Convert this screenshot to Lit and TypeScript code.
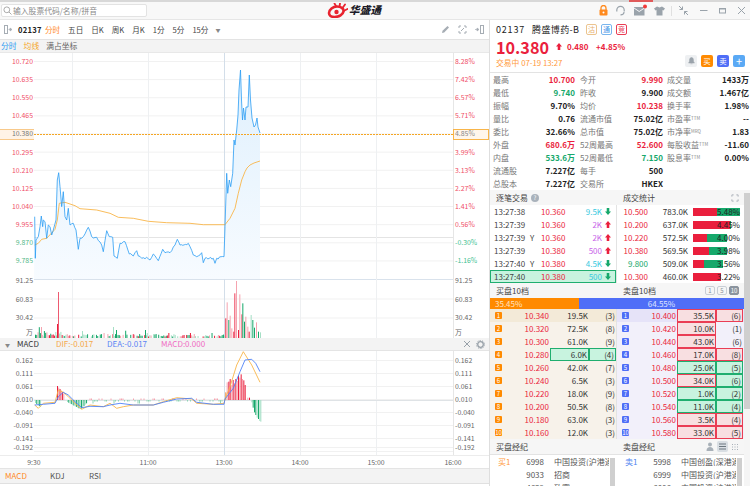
import { LitElement, html, css, svg, unsafeCSS } from "lit";
import { customElement } from "lit/decorators.js";

const RED = "#ea1f3d";
const GREEN = "#16a86b";
const FONT = '"Noto Sans CJK SC", sans-serif';

const pts = (a: number[], ox: number, oy: number) => {
  const r: [number, number][] = [];
  for (let i = 0; i < a.length; i += 2) r.push([ox + a[i] / 3, oy + a[i + 1] / 3]);
  return r;
};
const str = (p: [number, number][]) => p.map(([x, y]) => `${x.toFixed(1)},${y.toFixed(1)}`).join(" ");

const rnd = (i: number) => {
  const v = Math.sin(i * 12.9898 + 4.1) * 43758.5453;
  return v - Math.floor(v);
};

/* Adds one-minute sized wiggle between the digitised points, as a tick line has. */
const jitter = (p: [number, number][], amp: number) => {
  const out: [number, number][] = [];
  let n = 0;
  for (let i = 0; i < p.length - 1; i++) {
    const [x0, y0] = p[i];
    const [x1, y1] = p[i + 1];
    out.push([x0, y0]);
    const steps = Math.floor((x1 - x0) / 1.27);
    for (let s = 1; s < steps; s++) {
      const t = s / steps;
      out.push([x0 + (x1 - x0) * t, y0 + (y1 - y0) * t + (rnd(n++) - 0.5) * amp]);
    }
  }
  out.push(p[p.length - 1]);
  return out;
};

const PRICE = str(
  jitter(
    [
      ...pts([104,260,106,385,108,330,115,320,120,290,124,258,128,290,130,270,135,275,140,325,145,285,150,290,155,315,160,300,168,270,172,150,176,128,180,170,185,230,190,185,195,260,200,270,205,235,210,285,220,280,228,300,235,358,240,325,250,320,265,292,275,320,290,322,305,345,310,365,320,302,328,320,338,322,342,378,352,385,360,340,375,335,388,372,400,378,410,362,415,378,425,385,440,382,450,390,460,372,475,392,488,358,495,368,510,368,525,345,532,328,540,345,565,340,580,375,590,380,605,368,610,398,615,385,640,385,645,400,650,385,672,380,675,290,680,130,683,190,688,150,692,170,698,130,702,30,705,45,710,0], 0, 130),
      ...([[238,115],[239,90],[240.5,70],[241.5,100],[242.5,120],[243.5,108],[245,120],[246,107],[248,107],[249.3,75],[250.5,100],[252,118],[254,127],[255.5,125],[257,118],[258,127],[260,133]] as [number, number][]),
    ],
    2.2
  )
);
const AVG = str([
  ...pts([104,345,115,340,125,328,140,325,165,298,172,270,178,220,195,217,225,227,240,236,290,240,330,250,355,262,400,265,445,274,500,278,570,280,610,284,675,284,690,265,705,235,715,190,725,150,735,125], 0, 130),
  [247,168],[250,165],[254,163],[260,161],
]);
const DEA = str([
  ...pts([104,390,130,388,165,385,175,365,190,352,205,360,225,380,245,398,270,394,310,395,330,390,360,385,400,390,460,390,490,382,530,372,575,370,590,382,640,388,672,388], 0, 275),
  ...pts([45,372,70,340,90,290,105,255,125,253,137,265,150,290], 210, 275),
]);
const DIF = str([
  ...pts([104,390,115,400,130,385,165,382,175,345,190,352,205,365,225,385,245,403,270,390,310,395,330,385,350,400,370,395,400,390,460,390,490,380,530,368,575,372,590,385,640,388,672,385], 0, 275),
  ...pts([45,372,60,335,80,270,100,230,125,270,150,322], 210, 275),
]);

type Bar = { x: number; top: number; bottom: number; c: string };
const PINK = "#f5a3af";
const MINT = "#a5dfc5";
const COLS = [RED, PINK, GREEN, MINT];

const volBars = (): Bar[] => {
  const out: Bar[] = [];
  for (let i = 0; i < 150; i++) {
    const x = 35 + i * 1.27;
    const r = rnd(i);
    let h = i < 25 ? 1 + r * 6 : r < 0.35 ? 0 : r * 4;
    if (i % 17 === 3) h += 5;
    if (h < 0.5) continue;
    out.push({ x, top: 338 - h, bottom: 338, c: COLS[Math.floor(rnd(i + 300) * 4)] });
  }
  out.push({ x: 41, top: 327, bottom: 338, c: PINK });
  out.push({ x: 58, top: 292, bottom: 338, c: "#ee5a70" });
  out.push({ x: 57, top: 324, bottom: 338, c: RED });
  out.push({ x: 113, top: 327, bottom: 338, c: MINT });
  out.push({ x: 116, top: 330, bottom: 338, c: GREEN });
  out.push({ x: 145, top: 330, bottom: 338, c: GREEN });
  const post: [number, number, string][] = [
    [46,130,RED],[50,82,PINK],[55,135,GREEN],[59,122,PINK],[64,160,PINK],[70,170,RED],[73,55,"#ee3a55"],[78,18,PINK],
    [84,165,RED],[88,58,PINK],[94,118,"#ee5a70"],[97,85,GREEN],[102,140,GREEN],[106,125,PINK],[112,155,PINK],[116,170,RED],
    [122,120,MINT],[127,135,GREEN],[132,158,GREEN],[138,142,PINK],[144,170,GREEN],[150,172,MINT],
  ];
  for (const [x, y, c] of post) out.push({ x: 210 + x / 3, top: 275 + y / 3, bottom: 338, c });
  return out;
};

const macdBars = (): Bar[] => {
  const out: Bar[] = [];
  const add = (x: number, y: number, c: string) =>
    out.push({ x, top: Math.min(y, 400), bottom: Math.max(y, 400), c });
  for (let i = 0; i < 5; i++) add(35 + i * 1.27, 403 + i, i % 2 ? GREEN : MINT);
  for (let i = 0; i < 6; i++) add(57 + i * 1.27, 386 + i * 1.5, i % 2 ? PINK : RED);
  for (let i = 0; i < 16; i++) add(67 + i * 1.27, 402 + (i < 11 ? i * 0.7 : (16 - i) * 1.3), i % 2 ? GREEN : MINT);
  for (let i = 0; i < 90; i++) {
    const x = 88 + i * 1.5;
    const r = rnd(i + 60);
    if (r < 0.4) continue;
    add(x, i % 7 < 3 ? 398.5 : 401.5 + (r > 0.85 ? 2 : 0), i % 7 < 3 ? PINK : "#8fd6b5");
  }
  const reds: [number, number, string][] = [
    [46,352,"#f08a30"],[50,322,PINK],[55,320,RED],[59,312,RED],[64,330,PINK],[68,315,RED],[72,325,PINK],[76,312,RED],
    [80,318,PINK],[84,302,RED],[88,308,PINK],[92,298,RED],[96,312,PINK],[100,316,RED],[104,330,RED],[112,368,PINK],[117,368,RED],
    [124,382,MINT],[128,398,GREEN],[132,412,GREEN],[136,420,GREEN],[140,428,MINT],[144,432,GREEN],[148,438,MINT],[151,440,MINT],
  ];
  for (const [x, y, c] of reds) add(210 + x / 3, 275 + y / 3, c);
  return out;
};

const QUOTE: [string, string, string, string][][] = [
  [["最高","10.700","r",""],["今开","9.990","r",""],["成交量","1433万","",""]],
  [["最低","9.740","g",""],["昨收","9.900","",""],["成交额","1.467亿","",""]],
  [["振幅","9.70%","",""],["均价","10.238","r",""],["换手率","1.98%","",""]],
  [["量比","0.76","",""],["流通市值","75.02亿","",""],["市盈率","--","","TTM"]],
  [["委比","32.66%","",""],["总市值","75.02亿","",""],["市净率","1.83","","MRQ"]],
  [["外盘","680.6万","r",""],["52周最高","52.600","r",""],["每股收益","-11.60","","TTM"]],
  [["内盘","533.6万","g",""],["52周最低","7.150","g",""],["股息率","0.00%","","TTM"]],
  [["流通股","7.227亿","",""],["每手","500","",""],["","","",""]],
  [["总股本","7.227亿","",""],["交易所","HKEX","",""],["","","",""]],
];

const TRADES = [
  ["13:27:38","","10.360","9.5K","#38c9e0","d"],
  ["13:27:39","","10.360","2K","#c765e8","u"],
  ["13:27:39","Y","10.360","2K","#c765e8","u"],
  ["13:27:39","","10.380","500","#c765e8","u"],
  ["13:27:40","Y","10.380","4.5K","#38c9e0","d"],
  ["13:27:40","","10.380","500","#38c9e0","d"],
];
const STATS: [string, string, string, number, number, string][] = [
  ["10.500","783.0K","5.48%",47,24,"r"],
  ["10.200","637.0K","4.45%",38,37,"r"],
  ["10.220","572.5K","4.00%",34,14,"r"],
  ["10.380","569.5K","3.98%",34,16,"r"],
  ["9.800","509.0K","3.56%",30,11,"g"],
  ["10.300","460.0K","3.22%",28,28,"r"],
];
const BUY = [
  ["10.340","19.5K","(3)",""],["10.320","72.5K","(8)",""],["10.300","61.0K","(9)",""],["10.280","6.0K","(4)","g"],["10.260","42.0K","(7)",""],
  ["10.240","6.5K","(3)",""],["10.220","18.0K","(9)",""],["10.200","50.5K","(8)",""],["10.180","63.0K","(3)",""],["10.160","12.0K","(3)",""],
];
const SELL = [
  ["10.400","35.5K","(6)","r","r"],["10.420","10.0K","(1)","r",""],["10.440","43.0K","(6)","r",""],["10.460","17.0K","(8)","r","r"],["10.480","25.0K","(5)","g","g"],
  ["10.500","34.0K","(6)","r","g"],["10.520","1.0K","(2)","g","g"],["10.540","11.0K","(4)","g","g"],["10.560","3.5K","(4)","r","r"],["10.580","33.0K","(5)","r","r"],
];
const BROKER_L = [["买1","6998","中国投资(沪港通"],["","9033","招商"],["","4639","致富"]];
const BROKER_R = [["卖1","5998","中国创盈(深港通"],["","6999","中国投资(沪港通"],["","6006","中国投资(沪港通"]];

const PRICES = ["10.720","10.635","10.550","10.465","10.380","10.295","10.210","10.125","10.040","9.955","9.870","9.785"];
const PCTS = ["8.28%","7.42%","6.57%","5.71%","4.85%","3.99%","3.13%","2.27%","1.41%","0.56%","-0.30%","-1.16%"];
const GX = [72, 148, 224, 300, 376];

const arrow = (dir: string) =>
  html`<svg class="arr" viewBox="0 0 7 8"><path fill=${dir === "u" ? RED : GREEN} d=${dir === "u" ? "M3.5 0 7 4H5v4H2V4H0z" : "M3.5 8 0 4h2V0h3v4h2z"}></path></svg>`;

@customElement("app-root")
export class AppRoot extends LitElement {
  static styles = css`
    :host { display: block; width: 750px; height: 486px; overflow: hidden; background: #fff; font-family: ${unsafeCSS(FONT)}; font-size: 7.6px; color: #333; line-height: 1; }
    svg { display: block; flex: none; }
    .strip { height: 2px; background: linear-gradient(90deg, #d8d8d8 0 629px, #e05a5a 629px 653px, #d8d8d8 653px); }
    .head { height: 17px; display: flex; align-items: center; border-bottom: 1px solid #e6e6e6; background: #f8f8f8; box-sizing: content-box; }
    .search { width: 146px; height: 13px; margin-left: 1px; background: #fff; border: 1px solid #e3e3e3; border-radius: 2px; display: flex; align-items: center; gap: 1px; color: #8a8a8a; box-sizing: border-box; padding-left: 1px; font-size: 7.8px; }
    .logo { margin-left: 180px; display: flex; align-items: center; gap: 1px; width: 62px; }
    .logo b { font-size: 10.5px; font-style: italic; color: #1c1c28; letter-spacing: .3px; font-weight: 900; }
    .tools { margin-left: auto; display: flex; align-items: center; gap: 6px; padding-right: 4px; }
    .m1 { margin-left: 1px; } .m4 { margin-left: 4px; }
    .sep { width: 1px; height: 10px; background: #e0e0e0; }
    .body { display: flex; height: 467px; }
    .left { width: 489px; flex: none; border-right: 1px solid #dedede; display: flex; flex-direction: column; }
    .tb { height: 20px; flex: none; display: flex; align-items: center; gap: 8px; padding: 0 5px 0 4px; border-bottom: 1px solid #e3e3e3; color: #444; box-sizing: border-box; }
    .tb .code { font-weight: 700; color: #222; margin: 0 -5px 0 -3px; letter-spacing: .3px; }
    .on { color: #ff8a1f; }
    .tb .end { margin-left: auto; display: flex; gap: 8px; align-items: center; }
    .caret { color: #888; font-size: 5px; margin-left: -1px; }
    .sub { height: 13px; flex: none; background: #f3f3f3; display: flex; align-items: center; gap: 7px; padding-left: 1px; border-bottom: 1px solid #e8e8e8; color: #666; box-sizing: border-box; font-size: 7.8px; }
    .blue { color: #2d9cf2; } .amber { color: #f5a623; }
    .mbar { height: 13px; flex: none; background: #f3f3f3; display: flex; align-items: center; padding: 0 4px 0 6px; color: #444; border-bottom: 1px solid #e4e4e4; box-sizing: border-box; font-size: 8px; }
    .mbar .x { width: 12px; }
    .mbar .n { width: 39px; color: #333; }
    .mbar .dif { width: 51px; color: #f5a94a; } .mbar .dea { width: 54px; color: #5a84f5; } .mbar .mac { color: #f06cc4; }
    .mbar .end { margin-left: auto; display: flex; gap: 5px; align-items: center; }
    .tabs { height: 16px; flex: none; background: #f3f3f3; display: flex; align-items: center; padding-left: 5px; border-top: 1px solid #e4e4e4; border-bottom: 1px solid #e0e0e0; box-sizing: border-box; color: #555; font-size: 8px; }
    .tabs .on { width: 45px; } .tabs .k { width: 39px; }

    .right { flex: 1; min-width: 0; display: flex; flex-direction: column; }
    .info { height: 53px; flex: none; padding: 0 6px; display: flex; flex-direction: column; border-bottom: 1px solid #e3e3e3; box-sizing: border-box; }
    .l1 { height: 18px; display: flex; align-items: center; padding-top: 1px; font-size: 9px; color: #222; }
    .l1 .c { letter-spacing: .8px; width: 36px; }
    .l1 .nm { width: 54px; letter-spacing: .4px; white-space: nowrap; }
    .tag { width: 11px; height: 11px; box-sizing: border-box; border: 1px solid; border-radius: 2px; display: flex; align-items: center; justify-content: center; font-size: 7px; margin-right: 4px; }
    .t1 { color: #e8b070; border-color: #ecc48f; } .t2 { color: #4c9ae8; border-color: #7ab6ee; } .t3 { color: #ea3d55; border-color: #ea3d55; }
    .l2 { height: 17px; display: flex; align-items: center; color: ${unsafeCSS(RED)}; font-weight: 700; font-size: 8px; }
    .l2 .p { font-size: 16.2px; width: 60px; }
    .l2 .d { width: 29px; margin-left: 5px; }
    .arr { width: 6px; height: 7px; }
    .l3 { display: flex; align-items: center; justify-content: space-between; height: 17px; color: #ff9a3c; padding-bottom: 2px; box-sizing: border-box; font-size: 7.8px; }
    .btns { display: flex; gap: 4px; margin-right: -1px; margin-top: -3px; }
    .btn { width: 12px; height: 12px; border-radius: 2px; display: flex; align-items: center; justify-content: center; color: #fff; font-size: 7.4px; }
    .bell { background: #eef0f2; } .bb { background: #ff8a00; } .bs2 { background: #4f6ef7; } .bp { background: #5aa9f5; font-size: 11px; }
    .quote { flex: none; font-size: 8px; }
    .qr { height: 13px; display: grid; grid-template-columns: 86px 88px 86px; }
    .qc { display: flex; justify-content: space-between; align-items: center; padding: 0 1px 0 3px; color: #777; }
    .qc:nth-child(2) { padding-left: 4px; }
    .qc b { color: #222; font-weight: 700; }
    .qc b.r, .r { color: ${unsafeCSS(RED)}; }
    .qc b.g, .g { color: ${unsafeCSS(GREEN)}; }
    .qc sup { font-size: 4.5px; vertical-align: 2px; line-height: 0; color: #888; }
    .lower { flex: 1; min-height: 0; display: flex; font-size: 8px; }
    .main { width: 254px; flex: none; display: flex; flex-direction: column; }
    .sbar { width: 6px; flex: none; background: #f5f5f5; }
    .thumb { height: 216px; margin-top: 3px; background: #cfcfcf; }
    .sh { height: 15px; flex: none; display: grid; grid-template-columns: 127px 1fr; align-items: center; background: #f6f6f6; color: #444; }
    .sh > div { padding-left: 6px; display: flex; align-items: center; gap: 3px; }
    .sh .e { justify-content: space-between; padding-right: 5px; }
    .hint { width: 8px; height: 8px; border-radius: 50%; background: #a9b2bb; color: #fff; font-size: 6px; display: flex; align-items: center; justify-content: center; }
    .pick { display: flex; gap: 2px; }
    .pick i { width: 10px; height: 9px; border: 1px solid #c9cfd6; border-radius: 2px; color: #8a8f96; font-style: normal; font-size: 6px; display: flex; align-items: center; justify-content: center; box-sizing: border-box; }
    .pick i.a { background: #8b949e; color: #fff; border-color: #8b949e; }
    .views { display: flex; gap: 3px; align-items: center; }
    .two { display: grid; grid-template-columns: 127px 1fr; flex: none; }
    .two > div:first-child { border-right: 1px solid #e3e3e3; }
    .tr { height: 13px; display: flex; align-items: center; box-sizing: border-box; }
    .tr.hl { background: #c8f3df; border: 1px solid #1fae6f; }
    .t { width: 36px; padding-left: 4px; color: #444; box-sizing: content-box; white-space: nowrap; }
    .tr.hl .t { padding-left: 3px; }
    .y { width: 11px; color: #444; }
    .tp { width: 30px; color: ${unsafeCSS(RED)}; }
    .tq { width: 29px; text-align: right; margin-left: 2px; }
    .tr .arr { margin-left: 3px; }
    .sr { height: 13px; display: flex; align-items: center; }
    .sp { width: 31px; text-align: right; }
    .sq { width: 40px; text-align: right; color: #333; }
    .track { width: 47px; height: 8px; margin-left: 5px; position: relative; }
    .fill { height: 100%; background: ${unsafeCSS(GREEN)}; }
    .fill i { display: block; height: 100%; background: ${unsafeCSS(RED)}; }
    .track span { position: absolute; right: 0; top: 0; color: #222; }
    .ratio { height: 11px; flex: none; display: flex; align-items: center; }
    .ratio .a { width: 89px; height: 100%; background: #ff8a00; padding-left: 5px; box-sizing: border-box; display: flex; align-items: center; color: #ffe5c4; }
    .ratio .b { flex: 1; height: 100%; background: #4f6ef7; display: flex; align-items: center; justify-content: center; color: #dfe5ff; }
    .lv { height: 13px; display: flex; align-items: center; box-sizing: border-box; }
    .buy .lv { background: #f7f2ea; } .buy .lv.first { background: #f3ead8; }
    .sell .lv { background: #f2f0fa; } .sell .lv.first { background: #e6e3f8; }
    .no { width: 7px; height: 7px; margin-left: 5px; color: #fff; font-size: 6px; display: flex; align-items: center; justify-content: center; flex: none; border-radius: 1px; }
    .buy .no { background: #ff8a00; } .sell .no { background: #4f6ef7; }
    .lp { color: ${unsafeCSS(RED)}; text-align: right; flex: none; width: 47px; }
    .cell { height: 13px; display: flex; align-items: center; justify-content: flex-end; padding-right: 1px; box-sizing: border-box; flex: none; color: #333; }
    .cq { width: 39px; margin-left: 1px; } .cc { width: 27px; }
    .cell.rd { background: #f8dfe1; border: 1px solid #ea3d55; }
    .cell.gd { background: #c8f3df; border: 1px solid #1fae6f; }
    .br { height: 13px; display: flex; align-items: center; white-space: nowrap; color: #555; }
    .brs { flex: 1; min-height: 0; overflow: hidden; border-top: 1px solid #e3e3e3; display: grid; grid-template-columns: 127px 1fr; box-sizing: border-box; }
    .bc { display: flex; min-width: 0; }
    .bl { width: 120px; flex: none; }
    .bs { width: 5px; flex: none; margin-top: 3px; background: #cfcfcf; }
    .bn { width: 28px; padding-left: 8px; box-sizing: border-box; flex: none; }
    .bn.o { color: #ff9a3c; } .bn.u { color: #4f84f0; }
    .bi { width: 26px; text-align: right; flex: none; }
    .bm { margin-left: 10px; width: 55px; overflow: hidden; flex: none; }
  `;

  private mainChart() {
    const ys = PRICES.map((_, i) => 61.5 + i * 18.13);
    return svg`
      <defs><linearGradient id="fg" x1="0" y1="0" x2="0" y2="1"><stop offset="0" stop-color="#dff0fd"></stop><stop offset="1" stop-color="#f7fbff"></stop></linearGradient></defs>
      ${ys.map((y) => svg`<line x1="34" x2="453" y1=${y} y2=${y} stroke="#f1f1f1"></line>`)}
      <line x1="34" x2="453" y1="237.5" y2="237.5" stroke="#e4e4e4"></line>
      ${[299, 318].map((y) => svg`<line x1="34" x2="453" y1=${y} y2=${y} stroke="#f1f1f1"></line>`)}
      <line x1="34" x2="453" y1="279.5" y2="279.5" stroke="#d9e2ec"></line>
      ${GX.map((x) => svg`<line x1=${x + 0.5} x2=${x + 0.5} y1="53" y2="338" stroke=${x === 224 ? "#d3dee9" : "#eef0f2"}></line>`)}
      <line x1="453.5" x2="453.5" y1="53" y2="338" stroke="#e6e6e6"></line>
      <polygon points=${`34,279 ${PRICE} 260,279`} fill="url(#fg)"></polygon>
      <polyline points=${AVG} fill="none" stroke="#f8b54a" stroke-width=".9"></polyline>
      <polyline points=${PRICE} fill="none" stroke="#2b9df4" stroke-width=".8"></polyline>
      <line x1="34" x2="453" y1="134.5" y2="134.5" stroke="#f5a623" stroke-dasharray="2 1"></line>
      <rect x="0" y="130" width="34" height="9" fill="#fff3e6"></rect>
      <line x1="0" x2="34" y1="129.5" y2="129.5" stroke="#f8c98a"></line>
      <line x1="0" x2="34" y1="139.5" y2="139.5" stroke="#f8c98a"></line>
      <rect x="453.5" y="129.5" width="35" height="10" fill="#fff6ec" stroke="#f8b54a"></rect>
      ${volBars().map((b) => svg`<rect x=${b.x} y=${b.top} width="1" height=${b.bottom - b.top} fill=${b.c}></rect>`)}
      ${PRICES.map((p, i) => svg`<text x="33" y=${ys[i] + 2.4} text-anchor="end" font-size="6.9" fill=${i === 4 ? "#777" : i < 10 ? "#ef4d66" : "#55b98a"}>${p}</text>`)}
      ${PCTS.map((p, i) => svg`<text x="455" y=${ys[i] + 2.4} font-size="6.9" fill=${i === 4 ? "#888" : i < 10 ? "#ef4d66" : "#40c090"}>${p}</text>`)}
      ${([["91.25", 280.5], ["60.83", 299.5], ["30.42", 318]] as [string, number][]).map(([t, y]) => svg`
        <text x="33" y=${y + 2.4} text-anchor="end" font-size="6.9" fill="#666">${t}</text>
        <text x="455" y=${y + 2.4} font-size="6.9" fill="#666">${t}</text>`)}
      <text x="33" y="334.5" text-anchor="end" font-size="6.9" fill="#666">万</text>
      <text x="455" y="334.5" font-size="6.9" fill="#666">万</text>
    `;
  }

  private macdChart() {
    const labels: [string, number][] = [["0.162",360.5],["0.111",373.5],["0.061",386.5],["0.010",399.5],["-0.040",412.5],["-0.091",425.5],["-0.141",438.5],["-0.192",447.5]];
    return svg`
      ${labels.map(([, y]) => svg`<line x1="34" x2="453" y1=${y} y2=${y} stroke="#f1f1f1"></line>`)}
      <line x1="34" x2="453" y1="451.5" y2="451.5" stroke="#f1f1f1"></line>
      ${GX.map((x) => svg`<line x1=${x + 0.5} x2=${x + 0.5} y1="351" y2="455" stroke=${x === 224 ? "#d3dee9" : "#eef0f2"}></line>`)}
      <line x1="453.5" x2="453.5" y1="351" y2="455" stroke="#e6e6e6"></line>
      <line x1="0" x2="490" y1="455.5" y2="455.5" stroke="#ececec"></line>
      <line x1="34" x2="453" y1="400.5" y2="400.5" stroke="#dfe3e6"></line>
      ${macdBars().map((b) => svg`<rect x=${b.x} y=${b.top} width="1" height=${b.bottom - b.top} fill=${b.c}></rect>`)}
      <polyline points=${DIF} fill="none" stroke="#f8b54a" stroke-width=".9"></polyline>
      <polyline points=${DEA} fill="none" stroke="#4f82f7" stroke-width=".9"></polyline>
      ${labels.map(([t, y]) => svg`
        <text x="33" y=${y + 2.4} text-anchor="end" font-size="6.9" fill="#666">${t}</text>
        <text x="455" y=${y + 2.4} font-size="6.9" fill="#666">${t}</text>`)}
      ${([["9:30",34],["11:00",148],["13:00",224],["14:00",300],["15:00",376],["16:00",453]] as [string, number][]).map(([t, x]) => svg`
        <text x=${x} y="464.5" text-anchor="middle" font-size="6.9" fill="#666">${t}</text>`)}
    `;
  }

  private headerIcons() {
    const g = "#9aa3ab";
    return html`
      <div class="tools">
        <svg width="9" height="11" viewBox="0 0 9 11"><path d="M2 5V3a2.5 2.5 0 0 1 5 0v2" fill="none" stroke="#ff8a1f" stroke-width="1.3"></path><rect x="0.5" y="4.500" width="8" height="6" rx="1" fill="#ff8a1f"></rect><circle cx="4.500" cy="7.500" r="1" fill="#fff"></circle></svg>
        <svg class="m1" width="11" height="11" viewBox="0 0 11 11"><path d="M1.800 6.500V5a3.700 3.700 0 0 1 7.400 0v1.500M9 7c0 2-2 2.800-3.500 2.800" fill="none" stroke=${g} stroke-width="1.200"></path></svg>
        <svg class="m1" width="15" height="13" viewBox="0 0 15 13"><path d="M1 3h10.500v8.500H1z" fill=${g}></path><path d="M1 4l5.200 3.500L11.500 4" fill="none" stroke="#fff" stroke-width=".9"></path><circle cx="12" cy="2.500" r="2" fill="#f03a3a"></circle></svg>
        <svg width="11" height="10" viewBox="0 0 11 10"><path d="M3 .5 5.500 1.500 8 .5l3 2-1.500 2L8.500 4v5.500h-6V4l-1 .5L0 2.500z" fill=${g}></path></svg>
        <span class="sep"></span>
        <svg width="11" height="11" viewBox="0 0 11 11"><path d="M1 1l3.500 3.500M4.500 1.500v3h-3M10 10 6.500 6.500M6.500 9.500v-3h3" fill="none" stroke=${g} stroke-width="1"></path></svg>
        <svg class="m4" width="9" height="9" viewBox="0 0 9 9"><path d="M1 4.500h7.500" stroke=${g}></path></svg>
        <svg class="m4" width="9" height="9" viewBox="0 0 9 9"><rect x="1.500" y="2.500" width="6" height="4.500" fill="none" stroke=${g}></rect><path d="M1.500 3h6" stroke=${g}></path></svg>
        <svg class="m4" width="9" height="9" viewBox="0 0 9 9"><path d="M1 1l7 7M8 1 1 8" stroke=${g} stroke-width="1"></path></svg>
      </div>`;
  }

  render() {
    const ic = "#a6adb4";
    return html`
      <div class="strip"></div>
      <div class="head">
        <div class="search">
          <svg width="9" height="9" viewBox="0 0 9 9"><circle cx="3.800" cy="3.800" r="2.900" fill="none" stroke="#aaa"></circle><path d="M6 6l2.500 2.500" stroke="#aaa"></path></svg>
          <span>输入股票代码/名称/拼音</span>
        </div>
        <div class="logo">
          <svg width="21" height="15" viewBox="0 0 21 15">
            <path d="M2 10c0-3.500 4-6.500 8-6.500s7 2 6.500 5C16 11.500 12 14 7.500 14 4 14 2 12.500 2 10z" fill="none" stroke="#e8232f" stroke-width="2.600"></path>
            <circle cx="9.500" cy="9" r="2.200" fill="#e8232f"></circle>
            <path d="M9 3 7.500.5M12.500 3.500 13 .5M15.500 5 18 1.500M17.500 7.500 20.500 6" stroke="#e8232f" stroke-width="1.800" stroke-linecap="round"></path>
          </svg>
          <b>华盛通</b>
        </div>
        ${this.headerIcons()}
      </div>
      <div class="body">
        <div class="left">
          <div class="tb">
            <svg width="9" height="9" viewBox="0 0 9 9"><rect x=".5" y=".5" width="3" height="8" fill="none" stroke=${ic}></rect><path d="M4.500 4.500h2.500M6 3l2 1.500L6 6z" stroke=${ic} fill=${ic} stroke-width=".7"></path></svg>
            <span class="code">02137</span><span class="on">分时</span><span>五日</span><span>日K</span><span>周K</span><span>月K</span><span>1分</span><span>5分</span><span>15分</span><span class="caret">▼</span>
            <div class="end">
              <svg width="9" height="9" viewBox="0 0 9 9"><path d="M1 8l.5-2.200L6.500 1 8 2.500 3.200 7.500z" fill=${ic}></path></svg>
              <svg width="9" height="9" viewBox="0 0 9 9"><path d="M1 3V1h2M6 1h2v2M8 6v2H6M3 8H1V6M3 6l3-3" fill="none" stroke=${ic}></path></svg>
              <svg width="9" height="9" viewBox="0 0 9 9"><path d="M0 4.500h2.500M2 3l2 1.500L2 6z" stroke=${ic} fill=${ic} stroke-width=".7"></path><rect x="5.500" y=".5" width="3" height="8" fill="none" stroke=${ic}></rect></svg>
            </div>
          </div>
          <div class="sub"><span class="blue">分时</span><span class="amber">均线</span><span>满占坐标</span></div>
          <svg width="489" height="285" viewBox="0 53 489 285" font-family=${FONT}>${this.mainChart()}</svg>
          <div class="mbar">
            <span class="caret x">▼</span>
            <span class="n">MACD</span>
            <span class="dif">DIF:-0.017</span>
            <span class="dea">DEA:-0.017</span>
            <span class="mac">MACD:0.000</span>
            <div class="end">
              <svg width="8" height="8" viewBox="0 0 8 8"><path d="M1 1l6 6M7 1 1 7" stroke="#98a1a9"></path></svg>
              <svg width="9" height="9" viewBox="0 0 9 9"><circle cx="4.500" cy="4.500" r="2.800" fill="none" stroke="#98a1a9" stroke-width="1.300"></circle><circle cx="4.500" cy="4.500" r="4" fill="none" stroke="#98a1a9" stroke-dasharray="1.200 1.300" stroke-width="1"></circle></svg>
            </div>
          </div>
          <svg width="489" height="117" viewBox="0 351 489 117" font-family=${FONT}>${this.macdChart()}</svg>
          <div class="tabs"><span class="on">MACD</span><span class="k">KDJ</span><span>RSI</span></div>
        </div>
        <div class="right">
          <div class="info">
            <div class="l1">
              <span class="c">02137</span><span class="nm">腾盛博药-B</span>
              <span class="tag t1">沽</span><span class="tag t2">通</span><span class="tag t3">竞</span>
            </div>
            <div class="l2">
              <span class="p">10.380</span>${arrow("u")}<span class="d">0.480</span><span>+4.85%</span>
            </div>
            <div class="l3">
              <span>交易中 07-19 13:27</span>
              <div class="btns">
                <span class="btn bell"><svg width="7" height="8" viewBox="0 0 7 8"><path d="M3.500.5C2 .5 1.500 2 1.500 3.500S1 5.500.5 6h6c-.5-.5-1-1-1-2.500S5 .5 3.500.5zM2.500 6.800h2" fill="#9aa3ab" stroke="#9aa3ab" stroke-width=".5"></path></svg></span>
                <span class="btn bb">买</span><span class="btn bs2">卖</span><span class="btn bp">+</span>
              </div>
            </div>
          </div>
          <div class="quote">
            ${QUOTE.map((r) => html`<div class="qr">${r.map((c) => html`<div class="qc"><span>${c[0]}${c[3] ? html`<sup>${c[3]}</sup>` : ""}</span><b class=${c[2]}>${c[1]}</b></div>`)}</div>`)}
          </div>
          <div class="lower">
            <div class="main">
              <div class="sh">
                <div>逐笔交易<span class="hint">?</span></div>
                <div class="e">成交统计<svg width="8" height="8" viewBox="0 0 9 9"><path d="M1 3V1h2M6 1h2v2M8 6v2H6M3 8H1V6" fill="none" stroke=${ic}></path></svg></div>
              </div>
              <div class="two">
                <div>
                  ${TRADES.map((t, i) => html`<div class="tr ${i === 5 ? "hl" : ""}">
                    <span class="t">${t[0]}</span><span class="y">${t[1]}</span><span class="tp">${t[2]}</span>
                    <span class="tq" style="color:${t[4]}">${t[3]}</span>${arrow(t[5])}
                  </div>`)}
                </div>
                <div>
                  ${STATS.map((s) => html`<div class="sr">
                    <span class="sp ${s[5]}">${s[0]}</span><span class="sq">${s[1]}</span>
                    <div class="track"><div class="fill" style="width:${s[3]}px"><i style="width:${s[4]}px"></i></div><span>${s[2]}</span></div>
                  </div>`)}
                </div>
              </div>
              <div class="sh">
                <div>买盘10档</div>
                <div class="e">卖盘10档<span class="pick"><i>1</i><i>5</i><i class="a">10</i></span></div>
              </div>
              <div class="ratio"><div class="a">35.45%</div><div class="b">64.55%</div></div>
              <div class="two">
                <div class="buy">
                  ${BUY.map((b, i) => html`<div class="lv ${i === 0 ? "first" : ""}">
                    <span class="no">${i + 1}</span><span class="lp">${b[0]}</span>
                    <span class="cell cq ${b[3] === "g" ? "gd" : ""}">${b[1]}</span><span class="cell cc ${b[3] === "g" ? "gd" : ""}">${b[2]}</span>
                  </div>`)}
                </div>
                <div class="sell">
                  ${SELL.map((b, i) => html`<div class="lv ${i === 0 ? "first" : ""}">
                    <span class="no">${i + 1}</span><span class="lp">${b[0]}</span>
                    <span class="cell cq ${b[3] === "g" ? "gd" : "rd"}">${b[1]}</span><span class="cell cc ${b[4] === "g" ? "gd" : b[4] === "r" ? "rd" : ""}">${b[2]}</span>
                  </div>`)}
                </div>
              </div>
              <div class="sh">
                <div>买盘经纪</div>
                <div class="e">卖盘经纪<span class="views">
                  <svg width="8" height="9" viewBox="0 0 8 9"><circle cx="4" cy="2.500" r="2" fill="#a8b0b8"></circle><path d="M.5 9c0-3 1.500-4 3.500-4s3.500 1 3.500 4z" fill="#a8b0b8"></path></svg>
                  <svg width="11" height="11" viewBox="0 0 11 11"><rect width="11" height="11" rx="2" fill="#d9dee3"></rect><path d="M2 3h7M2 5.500h7M2 8h7" stroke="#6d7780"></path></svg>
                  <svg width="8" height="8" viewBox="0 0 8 8"><path d="M1 1h1v1H1zM3.500 1h1v1h-1zM6 1h1v1H6zM1 3.500h1v1H1zM3.500 3.500h1v1h-1zM6 3.500h1v1H6zM1 6h1v1H1zM3.500 6h1v1h-1zM6 6h1v1H6z" fill="#a8b0b8"></path></svg>
                </span></div>
              </div>
              <div class="brs">
                ${[BROKER_L, BROKER_R].map((list, k) => html`<div class="bc">
                  <div class="bl">${list.map((r) => html`<div class="br">
                    <span class="bn ${k ? "u" : "o"}">${r[0]}</span><span class="bi">${r[1]}</span><span class="bm">${r[2]}</span>
                  </div>`)}</div>
                  <div class="bs"></div>
                </div>`)}
              </div>
            </div>
            <div class="sbar"><div class="thumb"></div></div>
          </div>
        </div>
      </div>
    `;
  }
}
